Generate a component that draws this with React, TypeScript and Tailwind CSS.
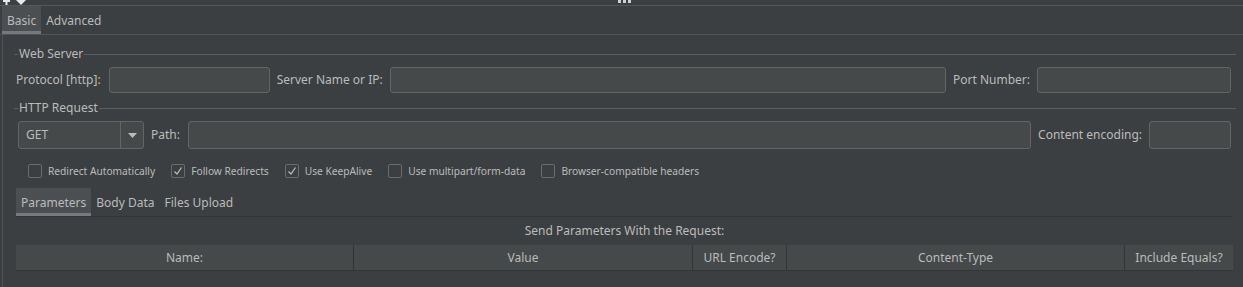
import React from "react";

const line = "bg-[#5b5e60]";

function Titled({ title }: { title: string }) {
  return (
    <div className="flex items-center h-[16px] ml-[11px] mr-[7px]">
      <div className={`w-[4px] h-px ${line}`} />
      <span className="px-[1px] leading-none">{title}</span>
      <div className={`flex-1 h-px ${line}`} />
    </div>
  );
}

function Field({ className = "" }: { className?: string }) {
  return <div className={`bg-[#45494a] border border-[#646464] rounded-[3px] ${className}`} />;
}

function Check({ label, checked }: { label: string; checked?: boolean }) {
  return (
    <div className="flex items-center gap-[6px]">
      <div className="w-[14px] h-[14px] border border-[#6b6b6b] rounded-[2px] flex items-center justify-center">
        {checked && (
          <svg width="12" height="12" viewBox="0 0 12 12">
            <polyline points="2.5,6.5 5,9 9.5,2.5" fill="none" stroke="#bbbbbb" strokeWidth="1.3" />
          </svg>
        )}
      </div>
      <span className="text-[10.2px] leading-none">{label}</span>
    </div>
  );
}

const columns = [
  { name: "Name:", w: "w-[338px]" },
  { name: "Value", w: "w-[339px]" },
  { name: "URL Encode?", w: "w-[94px]" },
  { name: "Content-Type", w: "w-[338px]" },
  { name: "Include Equals?", w: "flex-1" },
];

export default function App() {
  return (
    <div className="w-[1243px] h-[287px] overflow-hidden bg-[#3c3f41] text-[#bbbbbb] text-[12px] font-['Noto_Sans',sans-serif]">
      {/* toolbar remnant */}
      <div className="h-[6px] border-b border-[#555759] flex items-start">
        <svg width="26" height="5" viewBox="0 0 26 5" className="ml-[2px]">
          <rect x="1" y="0" width="7" height="2" fill="#e8e8e8" />
          <rect x="3.5" y="0" width="2" height="5" fill="#e8e8e8" />
          <polygon points="14,0 24,0 19,5" fill="#e8e8e8" />
        </svg>
        <div className="ml-[590px] flex gap-[2px]">
          <div className="w-[3px] h-[3px] bg-[#d0d0d0]" />
          <div className="w-[3px] h-[3px] bg-[#d0d0d0]" />
          <div className="w-[3px] h-[3px] bg-[#d0d0d0]" />
        </div>
      </div>

      {/* top tabs */}
      <div className="h-[29px] border-b border-[#505356] flex pl-[2px]">
        <div className="h-[28px] px-[5px] flex items-center bg-[#4b4f52] border-b-[3px] border-[#747a80] pt-[4px]">Basic</div>
        <div className="h-[28px] px-[5px] flex items-center pt-[1px]">Advanced</div>
      </div>

      <div className="ml-[2px] border-l border-[#505356] h-full">
        <div className="pt-[11px]">
          <Titled title="Web Server" />
        </div>

        <div className="mt-[5px] ml-[13px] mr-[12px] h-[26px] flex items-center">
          <span className="mr-[8px]">Protocol [http]:</span>
          <Field className="w-[161px] h-[26px]" />
          <span className="ml-[7px] mr-[7px]">Server Name or IP:</span>
          <Field className="flex-1 h-[26px]" />
          <span className="ml-[7px] mr-[7px]">Port Number:</span>
          <Field className="w-[194px] h-[26px]" />
        </div>

        <div className="mt-[7px]">
          <Titled title="HTTP Request" />
        </div>

        <div className="mt-[5px] ml-[15px] mr-[12px] h-[28px] flex items-center">
          <div className="w-[126px] h-[28px] bg-[#45494a] border border-[#646464] rounded-[3px] flex">
            <div className="flex-1 flex items-center pl-[7px]">GET</div>
            <div className="w-[23px] border-l border-[#646464] flex items-center justify-center">
              <svg width="9" height="5" viewBox="0 0 9 5">
                <polygon points="0,0 9,0 4.5,5" fill="#bbbbbb" />
              </svg>
            </div>
          </div>
          <span className="ml-[7px] mr-[8px]">Path:</span>
          <Field className="flex-1 h-[28px]" />
          <span className="ml-[7px] mr-[7px]">Content encoding:</span>
          <Field className="w-[82px] h-[28px]" />
        </div>

        <div className="mt-[15px] ml-[25px] h-[14px] flex items-center gap-[16px]">
          <Check label="Redirect Automatically" />
          <Check label="Follow Redirects" checked />
          <Check label="Use KeepAlive" checked />
          <Check label="Use multipart/form-data" />
          <Check label="Browser-compatible headers" />
        </div>

        {/* inner tabs */}
        <div className="mt-[10px] ml-[13px] mr-[10px]">
          <div className="h-[29px] border-b border-[#323436] flex">
            <div className="h-[28px] px-[5px] flex items-center bg-[#4b4f52] border-b-[3px] border-[#747a80] pt-[4px]">Parameters</div>
            <div className="h-[28px] px-[5px] flex items-center pt-[1px]">Body Data</div>
            <div className="h-[28px] px-[5px] flex items-center pt-[1px]">Files Upload</div>
          </div>
          <div className="h-[28px] flex items-center justify-center">Send Parameters With the Request:</div>
          <div className="h-[26px] flex bg-[#45494a] border-b border-[#323436]">
            {columns.map((c, i) => (
              <div
                key={c.name}
                className={`${c.w} h-[25px] flex items-center justify-center ${i < columns.length - 1 ? "border-r border-[#323436]" : ""}`}
              >
                {c.name}
              </div>
            ))}
          </div>
        </div>
      </div>
    </div>
  );
}
